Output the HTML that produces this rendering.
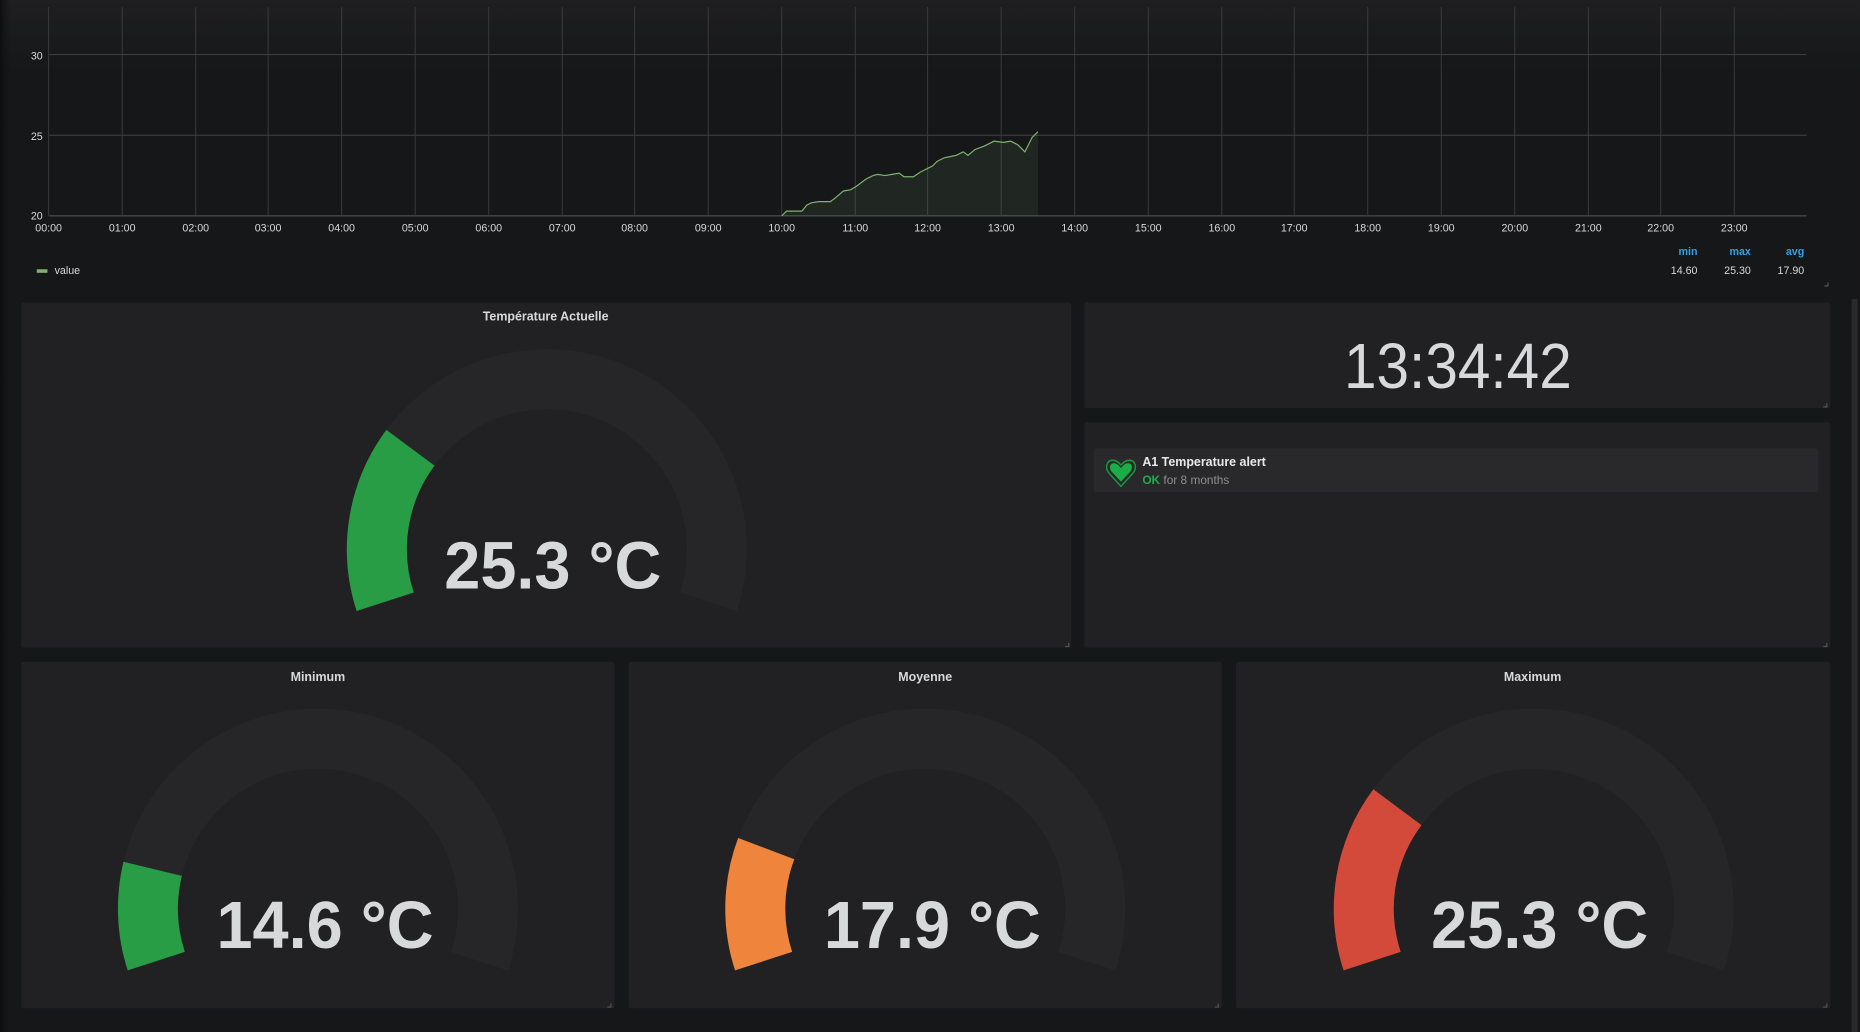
<!DOCTYPE html>
<html><head><meta charset="utf-8"><style>
html,body{margin:0;padding:0;background:#161719;width:1860px;height:1032px;overflow:hidden;}
svg{display:block}
text{font-family:"Liberation Sans",sans-serif}
</style></head><body>
<svg width="1860" height="1032" viewBox="0 0 1568 870" xmlns="http://www.w3.org/2000/svg">
<defs>
<linearGradient id="tg" x1="0" y1="0" x2="0" y2="1"><stop offset="0" stop-color="#1f1f21"/><stop offset="1" stop-color="#161719"/></linearGradient>
<linearGradient id="lg" x1="0" y1="0" x2="1" y2="0"><stop offset="0" stop-color="#0e0e10"/><stop offset="1" stop-color="#161719" stop-opacity="0"/></linearGradient>
</defs>
<rect width="1568" height="870" fill="#161719"/>
<rect width="1568" height="60" fill="url(#tg)"/>
<rect width="10" height="870" fill="url(#lg)"/>
<g stroke="#444446" stroke-width="0.8">
<line x1="41" y1="46" x2="1523" y2="46"/>
<line x1="41" y1="114" x2="1523" y2="114"/>
<line x1="41" y1="182" x2="1523" y2="182" stroke="#5a5a5c"/>
</g>
<g stroke="#3c3c3e" stroke-width="0.8">
<line x1="41" y1="6" x2="41" y2="182"/><line x1="103" y1="6" x2="103" y2="182"/><line x1="165" y1="6" x2="165" y2="182"/><line x1="226" y1="6" x2="226" y2="182"/><line x1="288" y1="6" x2="288" y2="182"/><line x1="350" y1="6" x2="350" y2="182"/><line x1="412" y1="6" x2="412" y2="182"/><line x1="474" y1="6" x2="474" y2="182"/><line x1="535" y1="6" x2="535" y2="182"/><line x1="597" y1="6" x2="597" y2="182"/><line x1="659" y1="6" x2="659" y2="182"/><line x1="721" y1="6" x2="721" y2="182"/><line x1="782" y1="6" x2="782" y2="182"/><line x1="844" y1="6" x2="844" y2="182"/><line x1="906" y1="6" x2="906" y2="182"/><line x1="968" y1="6" x2="968" y2="182"/><line x1="1030" y1="6" x2="1030" y2="182"/><line x1="1091" y1="6" x2="1091" y2="182"/><line x1="1153" y1="6" x2="1153" y2="182"/><line x1="1215" y1="6" x2="1215" y2="182"/><line x1="1277" y1="6" x2="1277" y2="182"/><line x1="1339" y1="6" x2="1339" y2="182"/><line x1="1400" y1="6" x2="1400" y2="182"/><line x1="1462" y1="6" x2="1462" y2="182"/>
</g>
<g fill="#d8d9da" font-size="9" text-anchor="end">
<text x="36" y="50">30</text><text x="36" y="118">25</text><text x="36" y="185">20</text>
</g>
<g fill="#d8d9da" font-size="9" text-anchor="middle">
<text x="41" y="195">00:00</text><text x="103" y="195">01:00</text><text x="165" y="195">02:00</text><text x="226" y="195">03:00</text><text x="288" y="195">04:00</text><text x="350" y="195">05:00</text><text x="412" y="195">06:00</text><text x="474" y="195">07:00</text><text x="535" y="195">08:00</text><text x="597" y="195">09:00</text><text x="659" y="195">10:00</text><text x="721" y="195">11:00</text><text x="782" y="195">12:00</text><text x="844" y="195">13:00</text><text x="906" y="195">14:00</text><text x="968" y="195">15:00</text><text x="1030" y="195">16:00</text><text x="1091" y="195">17:00</text><text x="1153" y="195">18:00</text><text x="1215" y="195">19:00</text><text x="1277" y="195">20:00</text><text x="1339" y="195">21:00</text><text x="1400" y="195">22:00</text><text x="1462" y="195">23:00</text>
</g>
<path d="M659,182 L663,178 L676,178 L680,173 L684,171 L690,170 L700,170 L704,167 L711,161 L717,160 L722,157 L730,151 L736,148 L740,147 L746,148 L752,147 L758,146 L762,149 L770,149 L776,145 L786,140 L790,136 L796,133 L806,131 L812,128 L816,131 L822,126 L830,123 L838,119 L846,120 L852,119 L858,122 L864,128 L870,116 L875,111 L875,182 Z" fill="#7eb26d" fill-opacity="0.1" stroke="none"/>
<polyline points="659,182 663,178 676,178 680,173 684,171 690,170 700,170 704,167 711,161 717,160 722,157 730,151 736,148 740,147 746,148 752,147 758,146 762,149 770,149 776,145 786,140 790,136 796,133 806,131 812,128 816,131 822,126 830,123 838,119 846,120 852,119 858,122 864,128 870,116 875,111" fill="none" stroke="#7eb26d" stroke-width="1"/>
<rect x="31" y="227" width="9" height="3" fill="#7eb26d"/>
<text x="46" y="231" fill="#d8d9da" font-size="9">value</text>
<g font-size="9" text-anchor="end" font-weight="bold" fill="#33a2e5">
<text x="1431" y="215">min</text><text x="1476" y="215">max</text><text x="1521" y="215">avg</text>
</g>
<g font-size="9" text-anchor="end" fill="#d8d9da">
<text x="1431" y="231">14.60</text><text x="1476" y="231">25.30</text><text x="1521" y="231">17.90</text>
</g>
<path d="M1538,241 h3 v-3" stroke="#555" fill="none" stroke-width="1"/>
<g fill="#212124">
<rect x="18" y="255" width="885" height="291" rx="2"/>
<rect x="914" y="255" width="629" height="89" rx="2"/>
<rect x="914" y="356" width="629" height="190" rx="2"/>
<rect x="18" y="558" width="500" height="292" rx="2"/>
<rect x="530" y="558" width="500" height="292" rx="2"/>
<rect x="1042" y="558" width="501" height="292" rx="2"/>
</g>
<g stroke="#555" fill="none" stroke-width="1">
<path d="M898,545 h3 v-3"/><path d="M1537,343 h3 v-3"/><path d="M1537,545 h3 v-3"/><path d="M512,849 h3 v-3"/><path d="M1024,849 h3 v-3"/><path d="M1537,849 h3 v-3"/>
</g>
<rect x="1561" y="252" width="5" height="618" fill="#2a2a2c"/>
<g fill="#d8d9da" font-size="10.5" font-weight="bold" text-anchor="middle">
<text x="460" y="270">Température Actuelle</text>
<text x="268" y="574">Minimum</text>
<text x="780" y="574">Moyenne</text>
<text x="1292" y="574">Maximum</text>
</g>
<g fill="none" stroke-width="50.6">
<g transform="translate(461,463) rotate(162)">
<circle r="143.3" stroke="#262628" stroke-dasharray="540.2 1000"/>
<circle r="143.3" stroke="#299c46" stroke-dasharray="136.6 1000"/>
</g>
<g transform="translate(268,766) rotate(162)">
<circle r="143.3" stroke="#262628" stroke-dasharray="540.2 1000"/>
<circle r="143.3" stroke="#299c46" stroke-dasharray="78.9 1000"/>
</g>
<g transform="translate(780,766) rotate(162)">
<circle r="143.3" stroke="#262628" stroke-dasharray="540.2 1000"/>
<circle r="143.3" stroke="#ef843c" stroke-dasharray="96.7 1000"/>
</g>
<g transform="translate(1293,766) rotate(162)">
<circle r="143.3" stroke="#262628" stroke-dasharray="540.2 1000"/>
<circle r="143.3" stroke="#d44a3a" stroke-dasharray="136.6 1000"/>
</g>
</g>
<g fill="#d8d9da" font-size="56.5" font-weight="bold" text-anchor="middle">
<text x="466" y="496" textLength="183" lengthAdjust="spacingAndGlyphs">25.3 °C</text>
<text x="274" y="799" textLength="183" lengthAdjust="spacingAndGlyphs">14.6 °C</text>
<text x="786" y="799" textLength="183" lengthAdjust="spacingAndGlyphs">17.9 °C</text>
<text x="1298" y="799" textLength="183" lengthAdjust="spacingAndGlyphs">25.3 °C</text>
</g>
<text x="1229" y="327" fill="#d8d9da" font-size="54" text-anchor="middle" textLength="192" lengthAdjust="spacingAndGlyphs">13:34:42</text>
<rect x="922" y="378" width="611" height="37" rx="2" fill="#29292c"/>
<path d="M945,410 L935,399 C931,394 933,388 938,388 C941,388 943,390 945,392 C947,390 949,388 952,388 C957,388 959,394 955,399 Z" fill="none" stroke="#1a9a3e" stroke-width="1.2"/>
<path d="M945,406 L937,397.5 C934.5,394 936,390.5 939,390.5 C941.5,390.5 943.5,392.5 945,394.5 C946.5,392.5 948.5,390.5 951,390.5 C954,390.5 955.5,394 953,397.5 Z" fill="#1aad48"/>
<text x="963" y="393" fill="#e8e8ea" font-size="10.5" font-weight="bold">A1 Temperature alert</text>
<text x="963" y="408" font-size="10"><tspan fill="#1aad48" font-weight="bold">OK</tspan><tspan fill="#8e8e8e"> for 8 months</tspan></text>
</svg>
</body></html>
